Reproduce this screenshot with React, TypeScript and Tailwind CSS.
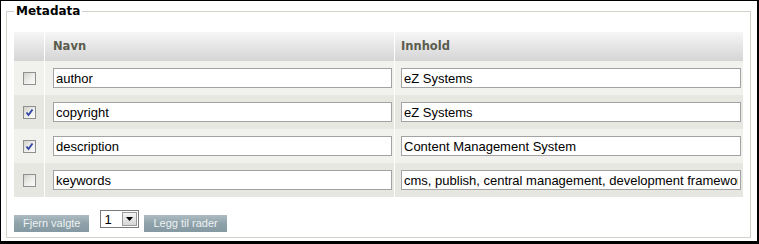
const rows = [
  { name: "author", value: "eZ Systems", checked: false },
  { name: "copyright", value: "eZ Systems", checked: true },
  { name: "description", value: "Content Management System", checked: true },
  { name: "keywords", value: "cms, publish, central management, development framework", checked: false },
];

const Check = ({ checked }: { checked: boolean }) => (
  <span className="flex w-[13px] h-[13px] border border-[#8e8f8f] bg-gradient-to-br from-[#d2d2cc] via-[#ececea] to-[#fbfbfb] items-center justify-center">
    {checked && (
      <svg width="9" height="9" viewBox="0 0 9 9">
        <path d="M1.5 4.5 L3.5 7 L7.5 1.5" fill="none" stroke="#2f45a6" strokeWidth="1.8" />
      </svg>
    )}
  </span>
);

const Button = ({ label }: { label: string }) => (
  <button className="block h-[17px] px-[9px] bg-gradient-to-b from-[#aebcc2] via-[#8fa2aa] to-[#8599a2] text-[#edf2f4] text-[11px] leading-[17px] font-['Liberation_Sans',Arial,sans-serif]">
    {label}
  </button>
);

export default function App() {
  return (
    <div className="w-[759px] h-[244px] bg-white border-l border-t border-r-2 border-b-[3px] border-black font-['Liberation_Sans',Arial,sans-serif]">
      <fieldset className="ml-[5px] mt-[3px] w-[745px] border border-[#d2d2ca] px-[7px] pt-[13px] pb-[5px]">
        <legend className="px-[2px] text-[12px] leading-[15px] font-bold text-black font-['DejaVu_Sans',Verdana,sans-serif]">
          Metadata
        </legend>

        {/* table */}
        <div className="grid grid-cols-[31px_350px_1fr]">
          <div className="h-[29px] bg-gradient-to-b from-[#f6f6f6] to-[#d5d5d5] border-r border-white" />
          <div className="h-[29px] bg-gradient-to-b from-[#f6f6f6] to-[#d5d5d5] border-r border-white pl-[8px] flex items-center text-[11.5px] font-bold text-[#5a5c4e] font-['DejaVu_Sans',Verdana,sans-serif]">
            Navn
          </div>
          <div className="h-[29px] bg-gradient-to-b from-[#f6f6f6] to-[#d5d5d5] pl-[6px] flex items-center text-[11.5px] font-bold text-[#5a5c4e] font-['DejaVu_Sans',Verdana,sans-serif]">
            Innhold
          </div>

          {rows.map((r, i) => {
            const bg = i % 2 === 0 ? "bg-[#f1f1ed]" : "bg-[#e7e7e1]";
            return (
              <div key={r.name} className="contents">
                <div className={`${bg} h-[34px] border-r border-white flex items-center justify-center`}>
                  <Check checked={r.checked} />
                </div>
                <div className={`${bg} h-[34px] border-r border-white flex items-center pl-[8px]`}>
                  <input
                    readOnly
                    value={r.name}
                    className="w-[339px] h-[20px] border border-[#a3a3a3] bg-white px-[2px] text-[13px] text-black outline-none"
                  />
                </div>
                <div className={`${bg} h-[34px] flex items-center pl-[6px]`}>
                  <input
                    readOnly
                    value={r.value}
                    className="w-[340px] h-[20px] border border-[#a3a3a3] bg-white px-[2px] text-[13px] text-black outline-none"
                  />
                </div>
              </div>
            );
          })}
        </div>

        {/* actions */}
        <div className="flex items-start h-[22px] mt-[13px]">
          <div className="mt-[5px]">
            <Button label="Fjern valgte" />
          </div>
          <div className="ml-[11px] w-[39px] h-[18px] border border-[#7a7a7a] bg-white flex items-center justify-between pl-[3px] pr-[1px]">
            <span className="text-[13px] leading-none text-black">1</span>
            <span className="w-[15px] h-[14px] border border-[#9a9a9a] bg-gradient-to-b from-[#f4f4f4] to-[#d6d6d6] flex items-center justify-center">
              <svg width="7" height="4" viewBox="0 0 7 4">
                <path d="M0 0 H7 L3.5 4 Z" fill="#000" />
              </svg>
            </span>
          </div>
          <div className="ml-[5px] mt-[5px]">
            <Button label="Legg til rader" />
          </div>
        </div>
      </fieldset>
    </div>
  );
}
